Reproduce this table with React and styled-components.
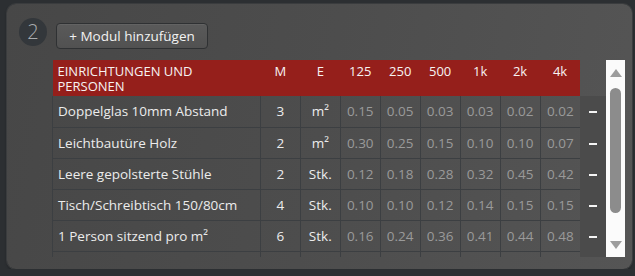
import React from 'react';
import styled, { createGlobalStyle } from 'styled-components';

const fontStyle = '"Open Sans", "Liberation Sans", Arial, sans-serif';

const GlobalStyle = createGlobalStyle`
  html, body {
    margin: 0;
    padding: 0;
    background: #2c2f32;
    font-family: ${fontStyle};
  }
`;

const Panel = styled.div`
  box-sizing: border-box;
  margin: 4px 3px 0 7px;
  width: 625px;
  height: 265px;
  padding: 14px 7px 0 12px;
  border-radius: 9px;
  background: linear-gradient(100deg, #474747 0%, #4d4d4d 50%, #555555 100%);
  box-shadow: 0 0 0 1px #3a3c3e, 0 2px 3px rgba(0, 0, 0, 0.35);
`;

const TopBar = styled.div`
  display: flex;
  align-items: flex-start;
  gap: 9px;
`;

const StepBadge = styled.div`
  width: 28px;
  height: 28px;
  border-radius: 50%;
  background: #33373b;
  color: #a9acaf;
  font-size: 20px;
  line-height: 28px;
  text-align: center;
  font-weight: 300;
`;

const AddButton = styled.button`
  margin-top: 5px;
  height: 26px;
  width: 152px;
  padding: 0;
  border: 1px solid #2f3133;
  border-radius: 4px;
  background: linear-gradient(#5a5a5a, #515151);
  color: #f2f2f2;
  font-family: ${fontStyle};
  font-size: 13.5px;
  font-weight: 500;
  box-shadow: inset 0 1px 0 rgba(255, 255, 255, 0.06);
`;

const TableArea = styled.div`
  display: flex;
  margin: 11px 0 0 33px;
  height: 197px;
`;

const ScrollBox = styled.div`
  width: 554px;
  overflow: hidden;
`;

const Table = styled.table`
  border-collapse: collapse;
  table-layout: fixed;
  font-family: ${fontStyle};
  font-size: 13.5px;
`;

const HeadCell = styled.th`
  box-sizing: border-box;
  background: #951f1b;
  color: #f7f2f2;
  font-weight: 500;
  font-size: 13px;
  line-height: 15px;
  height: 36px;
  padding: 4px ${(p) => (p.$left ? '5px' : '0')} 2px;
  vertical-align: top;
  text-align: ${(p) => (p.$left ? 'left' : 'center')};
  width: ${(p) => p.$w}px;
`;

const BlankHead = styled.th`
  width: 26px;
  padding: 0;
`;

const Row = styled.tr`
  height: 31px;
  border-bottom: 1px solid #3c3f42;
`;

const Cell = styled.td`
  box-sizing: border-box;
  padding: 0 ${(p) => (p.$left ? '5px' : '0')};
  border-left: 1px solid #3c3f42;
  text-align: ${(p) => (p.$left ? 'left' : 'center')};
  color: ${(p) => (p.$muted ? '#9a9a9a' : '#ececec')};
  font-weight: ${(p) => (p.$muted ? 400 : 500)};
  white-space: nowrap;
  vertical-align: middle;
`;

const MinusCell = styled.td`
  padding: 0 0 0 9px;
  background: #4b4b4b;
  border-bottom: 2px solid #4b4b4b;
`;

const Minus = styled.span`
  display: block;
  width: 8px;
  height: 2px;
  margin-top: 2px;
  background: #f4f4f4;
`;

const ScrollTrack = styled.div`
  width: 19px;
  background: #fbfbfb;
  display: flex;
  flex-direction: column;
  align-items: center;
  padding-top: 9px;
  box-sizing: border-box;
`;

const ArrowUp = styled.div`
  width: 0;
  height: 0;
  border-left: 6px solid transparent;
  border-right: 6px solid transparent;
  border-bottom: 8px solid #9d9d9d;
`;

const ArrowDown = styled.div`
  width: 0;
  height: 0;
  border-left: 6px solid transparent;
  border-right: 6px solid transparent;
  border-top: 8px solid #9d9d9d;
  margin-top: 28px;
`;

const Thumb = styled.div`
  width: 11px;
  height: 125px;
  margin-top: 11px;
  border-radius: 6px;
  background: #8c8c8c;
`;

const bands = ['125', '250', '500', '1k', '2k', '4k'];

const rows = [
  { name: 'Doppelglas 10mm Abstand', m: '3', e: 'm²', v: ['0.15', '0.05', '0.03', '0.03', '0.02', '0.02'] },
  { name: 'Leichtbautüre Holz', m: '2', e: 'm²', v: ['0.30', '0.25', '0.15', '0.10', '0.10', '0.07'] },
  { name: 'Leere gepolsterte Stühle', m: '2', e: 'Stk.', v: ['0.12', '0.18', '0.28', '0.32', '0.45', '0.42'] },
  { name: 'Tisch/Schreibtisch 150/80cm', m: '4', e: 'Stk.', v: ['0.10', '0.10', '0.12', '0.14', '0.15', '0.15'] },
  { name: '1 Person sitzend pro m²', m: '6', e: 'Stk.', v: ['0.16', '0.24', '0.36', '0.41', '0.44', '0.48'] },
  { name: '', m: '', e: '', v: ['', '', '', '', '', ''] },
];

export default function App() {
  return (
    <>
      <GlobalStyle />
      <Panel>
        <TopBar>
          <StepBadge>2</StepBadge>
          <AddButton>+ Modul hinzufügen</AddButton>
        </TopBar>
        <TableArea>
          <ScrollBox>
            <Table>
              <thead>
                <tr>
                  <HeadCell $left $w={208}>EINRICHTUNGEN UND PERSONEN</HeadCell>
                  <HeadCell $w={40}>M</HeadCell>
                  <HeadCell $w={40}>E</HeadCell>
                  {bands.map((b) => (
                    <HeadCell key={b} $w={40}>{b}</HeadCell>
                  ))}
                  <BlankHead />
                </tr>
              </thead>
              <tbody>
                {rows.map((r, i) => (
                  <Row key={i}>
                    <Cell $left>{r.name}</Cell>
                    <Cell>{r.m}</Cell>
                    <Cell>{r.e}</Cell>
                    {r.v.map((v, j) => (
                      <Cell key={j} $muted>{v}</Cell>
                    ))}
                    <MinusCell>{r.name ? <Minus /> : null}</MinusCell>
                  </Row>
                ))}
              </tbody>
            </Table>
          </ScrollBox>
          <ScrollTrack>
            <ArrowUp />
            <Thumb />
            <ArrowDown />
          </ScrollTrack>
        </TableArea>
      </Panel>
    </>
  );
}
